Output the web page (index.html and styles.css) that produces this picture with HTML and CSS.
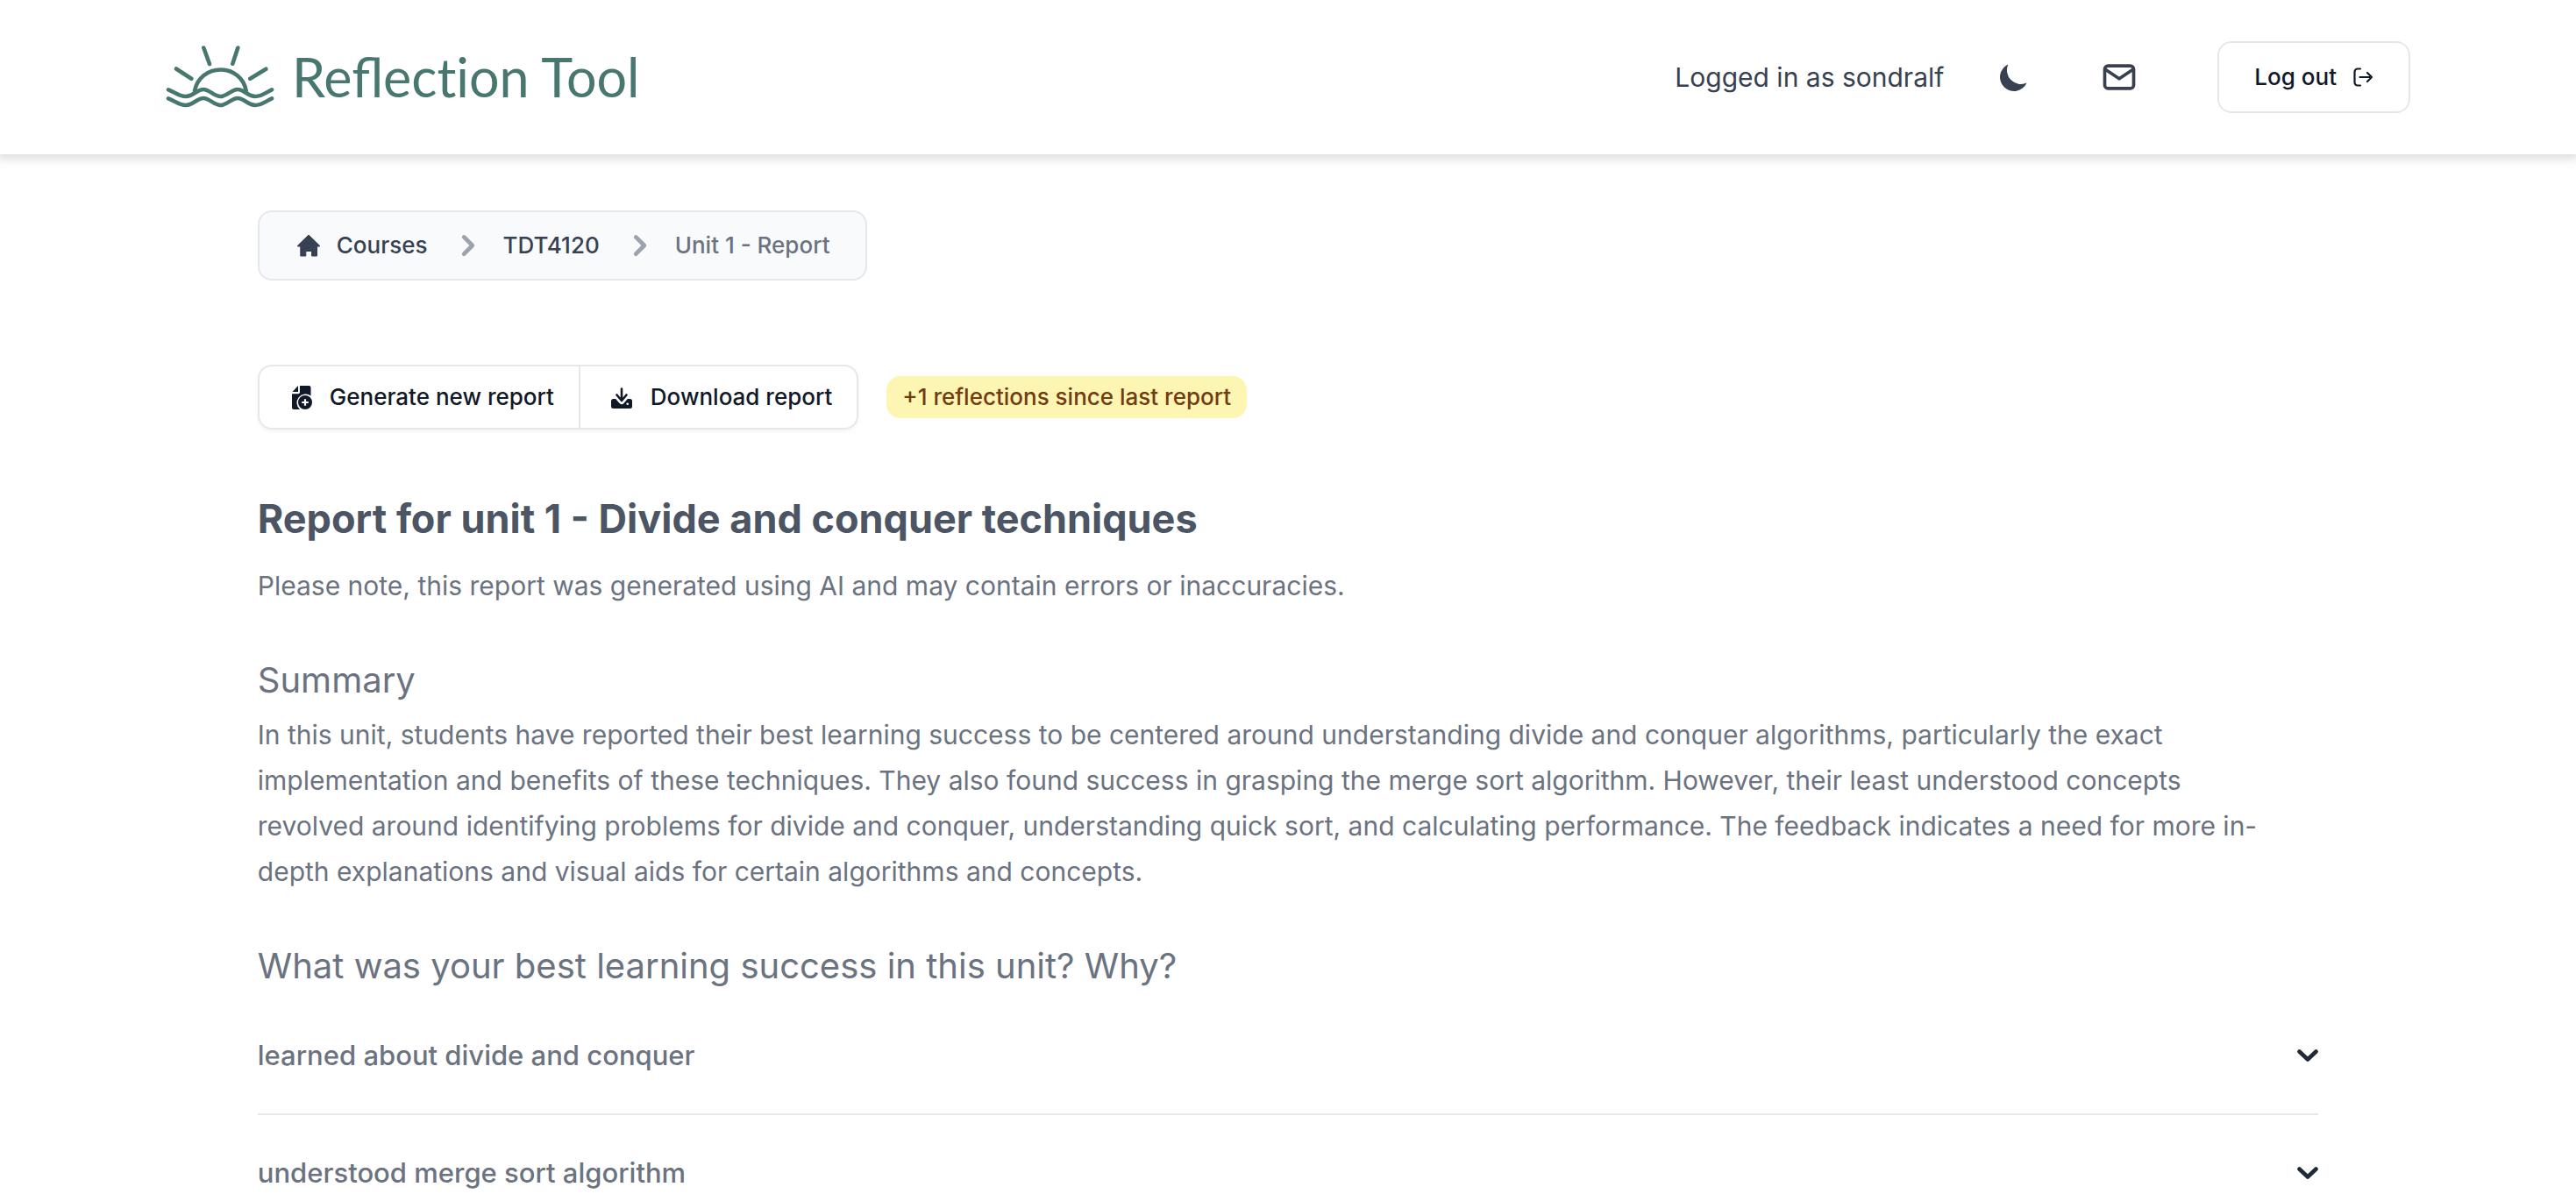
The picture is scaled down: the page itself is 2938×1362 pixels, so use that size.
FILE: index.html
```html
<!DOCTYPE html>
<html lang="en">
<head>
<meta charset="utf-8">
<title>Reflection Tool</title>
<link rel="stylesheet" href="styles.css">
</head>
<body>
<header class="site-header">
  <div class="header-inner">
    <a class="brand" href="#">
      <svg class="brand-mark" viewBox="0 0 124 72" fill="none" stroke="currentColor" stroke-width="4.600" stroke-linecap="round" stroke-linejoin="round" aria-hidden="true">
        <path d="M43.300 2.500L50 21M82.300 2.500L76.300 20.700M12 26.500L29.300 37.700M114.300 26.700L96.300 37.700"/>
        <path d="M33 51.500C36 37 48 27.500 62.500 27.500S89 37 91.700 51.500"/>
        <path d="M3 50.300C10 53 15 58 23 58S36 50 43 50S55 58 62.500 58S75 50 82 50S94 58 102 58S115 53 121 50.300"/>
        <path d="M3 60.300C10 63 15 68 23 68S36 60 43 60S55 68 62.500 68S75 60 82 60S94 68 102 68S115 63 121 60.300"/>
      </svg>
      <span class="brand-name">Reflect&zwnj;ion Tool</span>
    </a>
    <div class="account">
      <span class="user">Logged in as sondralf</span>
      <button class="icon-button theme-toggle" type="button" aria-label="Dark mode">
        <svg class="icon-lg" viewBox="0 0 20 20" fill="currentColor"><path d="M17.293 13.293A8 8 0 016.707 2.707a8.001 8.001 0 1010.586 10.586z"/></svg>
      </button>
      <button class="icon-button messages" type="button" aria-label="Messages">
        <svg class="icon-xl" viewBox="0 0 24 24" fill="none" stroke="currentColor" stroke-width="2" stroke-linejoin="round"><rect x="3" y="5" width="18" height="14" rx="2"/><path d="M3 7l9 6 9-6"/></svg>
      </button>
      <button class="logout" type="button">Log out
        <svg class="icon-sm" viewBox="0 0 24 24" fill="none" stroke="currentColor" stroke-width="2.200" stroke-linecap="round" stroke-linejoin="round"><path d="M9 2.500H6a3.500 3.500 0 00-3.500 3.500v12A3.500 3.500 0 006 21.500h3M8.500 12H22M17 7l5 5-5 5"/></svg>
      </button>
    </div>
  </div>
</header>
<main class="page">
  <nav class="breadcrumb" aria-label="Breadcrumb">
    <a class="crumb" href="#"><svg class="icon-md" viewBox="0 0 32 32" fill="currentColor" stroke="currentColor" stroke-width="1" stroke-linejoin="round"><path d="M16 4L28.500 16.200V17H25.500V28H19.500V22.500H12.800V28H6.800V17H3.500V16.200z"/></svg>Courses</a>
    <svg class="separator" viewBox="0 0 20 20" fill="currentColor"><path fill-rule="evenodd" d="M7.293 14.707a1 1 0 010-1.414L10.586 10 7.293 6.707a1 1 0 011.414-1.414l4 4a1 1 0 010 1.414l-4 4a1 1 0 01-1.414 0z"/></svg>
    <a class="crumb" href="#">TDT4120</a>
    <svg class="separator" viewBox="0 0 20 20" fill="currentColor"><path fill-rule="evenodd" d="M7.293 14.707a1 1 0 010-1.414L10.586 10 7.293 6.707a1 1 0 011.414-1.414l4 4a1 1 0 010 1.414l-4 4a1 1 0 01-1.414 0z"/></svg>
    <span class="crumb crumb-current" aria-current="page">Unit 1 - Report</span>
  </nav>
  <div class="toolbar">
    <div class="button-group">
      <button class="group-button" type="button">
        <svg class="icon-md" viewBox="0 0 32 32" fill="currentColor"><path d="M5.500 10L12 3V10z"/><path d="M14 3H24.500a2 2 0 012 2V14.400A10 10 0 0014 30H7a2 2 0 01-2-2V12.300H12a2 2 0 002-2z"/><path fill-rule="evenodd" d="M20 14a8 8 0 100 16 8 8 0 000-16zM18.900 18.200h2.200v2.700h2.700v2.200h-2.700v2.700h-2.200v-2.700h-2.700v-2.200h2.700z"/></svg>Generate new report</button>
      <button class="group-button" type="button">
        <svg class="icon-md" viewBox="0 0 32 32" fill="none" stroke-linecap="round" stroke-linejoin="round"><rect x="3" y="18" width="24" height="11" rx="2.500" fill="currentColor"/><path d="M9.300 14L15 20.500L20.700 14" stroke="#fff" stroke-width="7"/><circle cx="21.700" cy="23.700" r="1.300" fill="#fff"/><path d="M15 6.500V20M9.500 13.500L15 20L20.500 13.500" stroke="currentColor" stroke-width="2.600"/></svg>Download report</button>
    </div>
    <span class="badge">+1 reflections since last report</span>
  </div>
  <article class="report">
    <h1 class="report-title">Report for unit 1 - Divide and conquer techniques</h1>
    <p class="body-text">Please note, this report was generated using AI and may contain errors or inaccuracies.</p>
    <section class="summary">
      <h2 class="section-title">Summary</h2>
      <p class="body-text">In this unit, students have reported their best learning success to be centered around understanding divide and conquer algorithms, particularly the exact implementation and benefits of these techniques. They also found success in grasping the merge sort algorithm. However, their least understood concepts revolved around identifying problems for divide and conquer, understanding quick sort, and calculating performance. The feedback indicates a need for more in-depth explanations and visual aids for certain algorithms and concepts.</p>
    </section>
    <section class="question">
      <h2 class="section-title">What was your best learning success in this unit? Why?</h2>
      <button class="theme" type="button" aria-expanded="false">learned about divide and conquer
        <svg class="chevron" viewBox="0 0 24 14" fill="none" stroke="currentColor" stroke-width="4.600" stroke-linecap="round" stroke-linejoin="round"><path d="M2.500 2.500L12 11.500L21.500 2.500"/></svg></button>
      <button class="theme" type="button" aria-expanded="false">understood merge sort algorithm
        <svg class="chevron" viewBox="0 0 24 14" fill="none" stroke="currentColor" stroke-width="4.600" stroke-linecap="round" stroke-linejoin="round"><path d="M2.500 2.500L12 11.500L21.500 2.500"/></svg></button>
    </section>
  </article>
</main>
</body>
</html>
```
FILE: styles.css
```css
* { box-sizing: border-box; }
body { margin: 0; background: #fff; color: #6b7280; font-family: Inter, "Liberation Sans", sans-serif; font-size: 30px; line-height: 52px; }
h1, h2, p { margin: 0; }
a { color: inherit; text-decoration: none; }
button { font: inherit; color: inherit; background: none; border: 0; padding: 0; margin: 0; cursor: pointer; }
svg { display: block; flex: none; }

.site-header { background: #fff; box-shadow: 0 0 12px 4px rgba(0, 0, 0, .16); }
.header-inner { display: flex; align-items: center; justify-content: space-between; max-width: 2560px; min-height: 176px; margin: 0 auto; }
.brand { display: flex; align-items: center; gap: 20px; color: #47776e; }
.brand-mark { width: 124px; height: 72px; }
.brand-name { font-family: Lato, sans-serif; font-size: 61px; line-height: 72px; }
.account { display: flex; align-items: center; color: #374151; }
.user { margin-right: 60px; }
.icon-button { display: flex; }
.theme-toggle { margin-right: 78px; }
.messages { margin-right: 90px; }
.icon-sm { width: 24px; height: 24px; }
.icon-md { width: 32px; height: 32px; }
.icon-lg { width: 40px; height: 40px; }
.icon-xl { width: 44px; height: 44px; }
.logout { display: flex; align-items: center; gap: 18px; padding: 19px 40px; border: 2px solid #e5e7eb; border-radius: 16px; color: #111827; font-size: 26px; font-weight: 500; line-height: 40px; }

.page { width: 80%; margin: 0 auto; padding-top: 64px; }
.breadcrumb { display: flex; align-items: center; width: fit-content; padding: 14px 40px; border: 2px solid #e5e7eb; border-radius: 16px; background: #f9fafb; font-size: 26px; font-weight: 500; line-height: 40px; color: #374151; }
.crumb { display: flex; align-items: center; gap: 16px; }
.crumb-current { color: #6b7280; }
.separator { width: 48px; height: 48px; margin: 0 16px 0 22px; color: #9ca3af; }

.toolbar { display: flex; align-items: center; gap: 32px; margin-top: 96px; }
.button-group { display: flex; border: 2px solid #e5e7eb; border-radius: 16px; box-shadow: 0 2px 4px rgba(0, 0, 0, .05); color: #111827; }
.group-button { display: flex; align-items: center; gap: 16px; padding: 15px 28px 15px 32px; font-size: 26px; font-weight: 500; line-height: 40px; }
.group-button + .group-button { border-left: 2px solid #e5e7eb; }
.badge { padding: 4px 18px; border-radius: 16px; background: #fdf6b2; color: #723b13; font-size: 26px; font-weight: 500; line-height: 40px; }

.report-title { margin-top: 70px; color: #4b5563; font-size: 45px; font-weight: 700; line-height: 64px; }
.body-text { max-width: 98%; }
.report-title + .body-text { margin-top: 18px; }
.summary { margin-top: 50px; }
.section-title { margin-bottom: 4px; font-size: 40px; font-weight: 400; line-height: 64px; }
.question { margin-top: 50px; }
.theme { display: flex; align-items: center; justify-content: space-between; width: 100%; padding: 40px 0; border-bottom: 2px solid #e5e7eb; font-size: 31px; font-weight: 500; text-align: left; }
.chevron { width: 24px; height: 14px; color: #1f2937; }
```
